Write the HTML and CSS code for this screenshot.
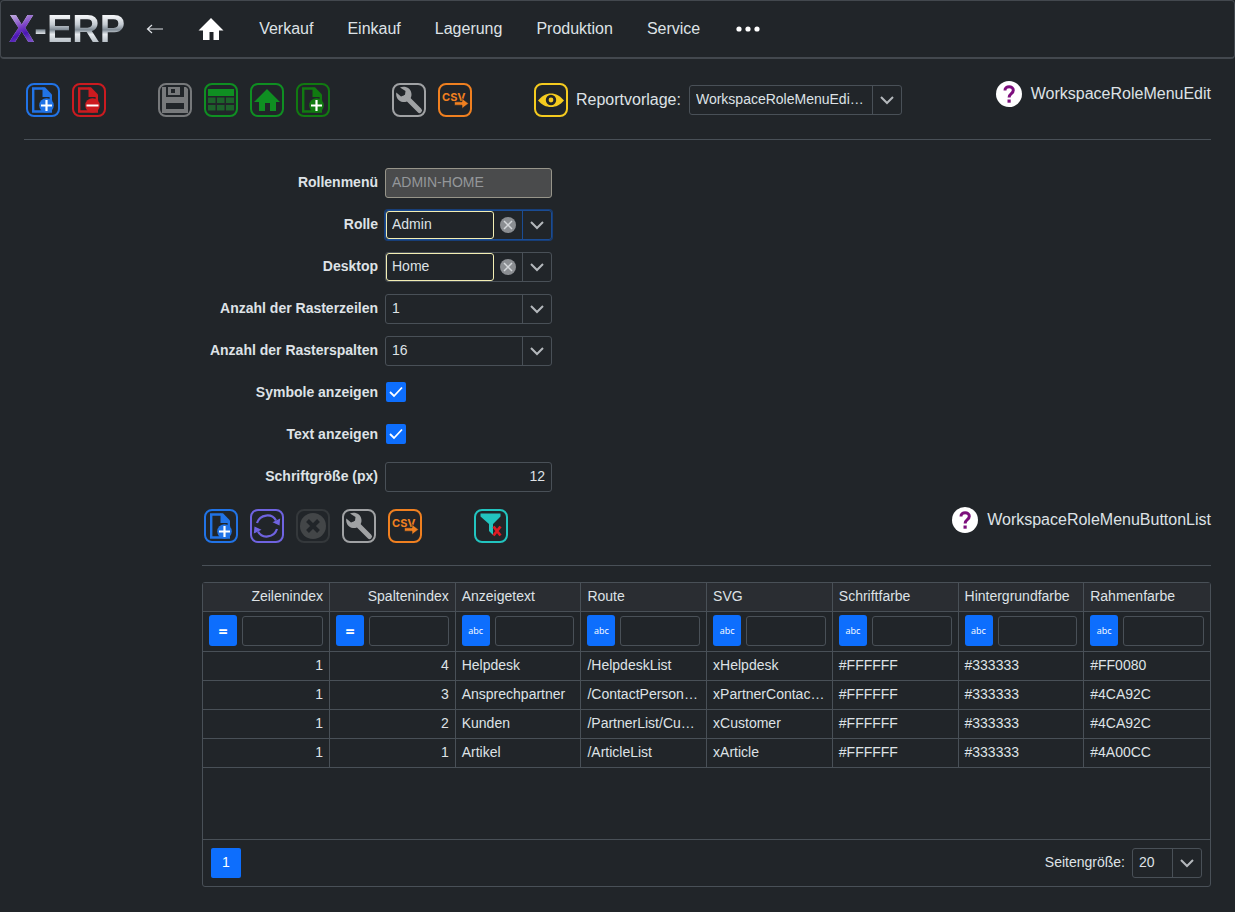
FILE: index.html
```
<!DOCTYPE html>
<html lang="de">
  <head>
    <meta charset="utf-8">
    <meta name="viewport" content="width=device-width, initial-scale=1">
    <title>X-ERP</title>
    <link rel="stylesheet" href="styles.css">
  </head>
  <body>
    <!-- shared icons -->
    <svg class="sprite" width="0" height="0">
      <symbol id="i-doc" viewBox="0 0 30 30">
        <path d="M22.800 11v15.500H5.200v-23h10" fill="none" stroke="currentColor" stroke-width="2.400"/>
        <path d="M14.500 2.300H17l7 7.200V12h-9.500z" fill="currentColor"/>
        <circle cx="18.500" cy="20.500" r="7.300" fill="currentColor"/>
      </symbol>
      <symbol id="i-doc-plus" viewBox="0 0 30 30">
        <use href="#i-doc"/>
        <path d="M18.500 15v11M13 20.500h11" stroke="#fff" stroke-width="2.200"/>
      </symbol>
      <symbol id="i-doc-minus" viewBox="0 0 30 30">
        <use href="#i-doc"/>
        <path d="M12.500 20.500h12" stroke="#fff" stroke-width="2"/>
      </symbol>
      <symbol id="i-wrench" viewBox="0 0 30 30">
        <path d="M12 12l13.500 13.500" stroke="currentColor" stroke-width="5" stroke-linecap="round"/>
        <path d="M6 2.500C11 .500 17 3 17.500 9c.300 5-4 8.500-8.500 8C4.500 16.500 1.500 12.500 2.300 7.500L7 11.500l4-1.500.500-4z" fill="currentColor"/>
      </symbol>
      <symbol id="i-csv" viewBox="0 0 30 30">
        <text class="csv-text" x="2" y="16" fill="currentColor">CSV</text>
        <path d="M14.500 16.800h7.500V13.500l6.500 5-6.500 5v-3.300h-7.500z" fill="currentColor" stroke="#212529" stroke-width=".6"/>
      </symbol>
      <symbol id="i-home" viewBox="0 0 30 30">
        <path d="M15 4l13 13h-4v9h-6v-8h-5v8H7v-9H2z" fill="currentColor"/>
      </symbol>
      <symbol id="i-chevron" viewBox="0 0 14 14">
        <path d="M1 4l6 6 6-6" fill="none" stroke="currentColor" stroke-width="2"/>
      </symbol>
      <symbol id="i-clear" viewBox="0 0 16 16">
        <circle cx="8" cy="8" r="8" fill="#8b8e92"/>
        <path d="M4 4l8 8M12 4l-8 8" stroke="#d4d7da" stroke-width="1.500"/>
      </symbol>
      <symbol id="i-help" viewBox="0 0 26 26">
        <circle cx="13" cy="13" r="13" fill="#fff"/>
        <path d="M9 9.500C8.700 4.300 17.500 4.500 17.300 9.300c0 3.500-4.200 3.200-4.200 7.200" fill="none" stroke="#7d0f7d" stroke-width="3"/>
        <path d="M11.500 18.500h3.200v3.200h-3.200z" fill="#7d0f7d"/>
      </symbol>
    </svg>

    <header class="topbar">
      <a class="logo" href="#">X-ERP</a>
      <button class="back" type="button" aria-label="Zurück">
        <svg width="18" height="12" viewBox="0 0 18 12"><path d="M17 6H2M6 2L1.500 6 6 10" fill="none" stroke="currentColor" stroke-width="1.200"/></svg>
      </button>
      <a class="home" href="#" aria-label="Home">
        <svg width="26" height="24" viewBox="0 0 26 24"><path d="M13 1l12.500 12.500H21V23h-5.500v-8h-4v8H5v-9.500H.5z" fill="#fff"/></svg>
      </a>
      <nav class="menu">
        <a href="#">Verkauf</a>
        <a href="#">Einkauf</a>
        <a href="#">Lagerung</a>
        <a href="#">Produktion</a>
        <a href="#">Service</a>
      </nav>
      <button class="more" type="button" aria-label="Mehr">
        <svg width="24" height="6" viewBox="0 0 24 6" fill="#fff"><circle cx="3" cy="3" r="2.600"/><circle cx="12" cy="3" r="2.600"/><circle cx="21" cy="3" r="2.600"/></svg>
      </button>
    </header>

    <main class="page">
      <div class="toolbar">
        <div class="tools">
          <div class="tool-group">
            <button class="tool blue" type="button" aria-label="Neu"><svg><use href="#i-doc-plus"/></svg></button>
            <button class="tool red" type="button" aria-label="Löschen"><svg><use href="#i-doc-minus"/></svg></button>
          </div>
          <div class="tool-group">
            <button class="tool grey" type="button" aria-label="Speichern">
              <svg viewBox="0 0 30 30" fill="currentColor"><path d="M2 2h4v10h18V2h2l2 2v24H2zM6 18v6h18v-6z" fill-rule="evenodd"/><path d="M8 2h12v8H8zM11 4v4h4V4z" fill-rule="evenodd"/></svg>
            </button>
            <button class="tool green" type="button" aria-label="Speichern und Liste">
              <svg viewBox="0 0 30 30"><path d="M2 4h26v7H2z" fill="currentColor"/><path d="M2 12.500h7.500V18H2zM11 12.500h7.500V18H11zM20 12.500h8V18h-8zM2 20h7.500v5.500H2zM11 20h7.500v5.500H11zM20 20h8v5.500h-8z" fill="#1d622b"/></svg>
            </button>
            <button class="tool green" type="button" aria-label="Speichern und Home"><svg><use href="#i-home"/></svg></button>
            <button class="tool green dark" type="button" aria-label="Speichern und Neu"><svg><use href="#i-doc-plus"/></svg></button>
          </div>
          <div class="tool-group wide">
            <button class="tool silver" type="button" aria-label="Werkzeuge"><svg><use href="#i-wrench"/></svg></button>
            <button class="tool orange" type="button" aria-label="CSV Export"><svg><use href="#i-csv"/></svg></button>
          </div>
          <div class="tool-group wide">
            <button class="tool yellow" type="button" aria-label="Vorschau">
              <svg viewBox="0 0 30 30"><path d="M2 15.500C6 11 10 8.500 15 8.500s9 2.500 13 7c-4 4.500-8 6.500-13 6.500s-9-2-13-6.500z" fill="currentColor"/><circle cx="15" cy="15" r="3.800" fill="none" stroke="#212529" stroke-width="2.800"/></svg>
            </button>
          </div>
          <label class="report-label" for="report">Reportvorlage:</label>
          <div class="dropdown report">
            <select id="report"><option>WorkspaceRoleMenuEditReport</option></select>
            <span class="arrow"><svg><use href="#i-chevron"/></svg></span>
          </div>
        </div>
        <a class="help" href="#"><svg><use href="#i-help"/></svg>WorkspaceRoleMenuEdit</a>
      </div>

      <div class="content">
        <form class="form">
          <label for="menu">Rollenmenü</label>
          <input class="text readonly" id="menu" type="text" value="ADMIN-HOME" disabled>

          <label for="role">Rolle</label>
          <div class="combo focused">
            <input id="role" type="text" value="Admin">
            <button class="clear" type="button" aria-label="Leeren"><svg><use href="#i-clear"/></svg></button>
            <button class="arrow" type="button" aria-label="Öffnen"><svg><use href="#i-chevron"/></svg></button>
          </div>

          <label for="desktop">Desktop</label>
          <div class="combo">
            <input id="desktop" type="text" value="Home">
            <button class="clear" type="button" aria-label="Leeren"><svg><use href="#i-clear"/></svg></button>
            <button class="arrow" type="button" aria-label="Öffnen"><svg><use href="#i-chevron"/></svg></button>
          </div>

          <label for="rows">Anzahl der Rasterzeilen</label>
          <div class="dropdown">
            <select id="rows"><option>1</option></select>
            <span class="arrow"><svg><use href="#i-chevron"/></svg></span>
          </div>

          <label for="cols">Anzahl der Rasterspalten</label>
          <div class="dropdown">
            <select id="cols"><option>16</option></select>
            <span class="arrow"><svg><use href="#i-chevron"/></svg></span>
          </div>

          <label for="icons">Symbole anzeigen</label>
          <input class="check" id="icons" type="checkbox" checked>

          <label for="texts">Text anzeigen</label>
          <input class="check" id="texts" type="checkbox" checked>

          <label for="size">Schriftgröße (px)</label>
          <input class="text number" id="size" type="text" value="12">
        </form>

        <div class="toolbar">
          <div class="tools">
            <div class="tool-group">
              <button class="tool blue" type="button" aria-label="Neu"><svg><use href="#i-doc-plus"/></svg></button>
              <button class="tool indigo" type="button" aria-label="Aktualisieren">
                <svg viewBox="0 0 30 30"><path d="M5 12C8 3 20 2 24 9.500M25 18c-3 9-15 10-19 2.500" fill="none" stroke="currentColor" stroke-width="2.200"/><path d="M28.200 7.500l-.700 7-7-3.200zM1.800 22.500l.700-7 7 3.200z" fill="currentColor"/></svg>
              </button>
              <button class="tool off" type="button" aria-label="Abbrechen" disabled>
                <svg viewBox="0 0 30 30"><circle cx="15" cy="15" r="13" fill="currentColor"/><path d="M9.500 9.500l11 11M20.500 9.500l-11 11" stroke="#212529" stroke-width="4"/></svg>
              </button>
              <button class="tool silver" type="button" aria-label="Werkzeuge"><svg><use href="#i-wrench"/></svg></button>
              <button class="tool orange" type="button" aria-label="CSV Export"><svg><use href="#i-csv"/></svg></button>
            </div>
            <div class="tool-group">
              <button class="tool teal" type="button" aria-label="Filter löschen">
                <svg viewBox="0 0 30 30"><path d="M4.500 2.500h20v3L17 13v11l-4-4v-7L4.500 5.500z" fill="currentColor"/><path d="M17.500 15.500l7 9M24.500 15.500l-7 9" stroke="#e01b24" stroke-width="2.800"/></svg>
              </button>
            </div>
          </div>
          <a class="help" href="#"><svg><use href="#i-help"/></svg>WorkspaceRoleMenuButtonList</a>
        </div>

        <div class="grid">
          <table>
            <colgroup>
              <col class="first">
              <col span="7">
            </colgroup>
            <thead>
              <tr>
                <th class="num">Zeilenindex</th>
                <th class="num">Spaltenindex</th>
                <th>Anzeigetext</th>
                <th>Route</th>
                <th>SVG</th>
                <th>Schriftfarbe</th>
                <th>Hintergrundfarbe</th>
                <th>Rahmenfarbe</th>
              </tr>
              <tr class="filters">
                <td><div class="filter"><button class="eq" type="button">=</button><input type="text" aria-label="Zeilenindex"></div></td>
                <td><div class="filter"><button class="eq" type="button">=</button><input type="text" aria-label="Spaltenindex"></div></td>
                <td><div class="filter"><button type="button">abc</button><input type="text" aria-label="Anzeigetext"></div></td>
                <td><div class="filter"><button type="button">abc</button><input type="text" aria-label="Route"></div></td>
                <td><div class="filter"><button type="button">abc</button><input type="text" aria-label="SVG"></div></td>
                <td><div class="filter"><button type="button">abc</button><input type="text" aria-label="Schriftfarbe"></div></td>
                <td><div class="filter"><button type="button">abc</button><input type="text" aria-label="Hintergrundfarbe"></div></td>
                <td><div class="filter"><button type="button">abc</button><input type="text" aria-label="Rahmenfarbe"></div></td>
              </tr>
            </thead>
            <tbody>
              <tr><td class="num">1</td><td class="num">4</td><td>Helpdesk</td><td>/HelpdeskList</td><td>xHelpdesk</td><td>#FFFFFF</td><td>#333333</td><td>#FF0080</td></tr>
              <tr><td class="num">1</td><td class="num">3</td><td>Ansprechpartner</td><td>/ContactPersonList</td><td>xPartnerContactPerson</td><td>#FFFFFF</td><td>#333333</td><td>#4CA92C</td></tr>
              <tr><td class="num">1</td><td class="num">2</td><td>Kunden</td><td>/PartnerList/Customer</td><td>xCustomer</td><td>#FFFFFF</td><td>#333333</td><td>#4CA92C</td></tr>
              <tr><td class="num">1</td><td class="num">1</td><td>Artikel</td><td>/ArticleList</td><td>xArticle</td><td>#FFFFFF</td><td>#333333</td><td>#4A00CC</td></tr>
            </tbody>
          </table>
          <div class="pager">
            <button class="page-no" type="button">1</button>
            <label class="size-label" for="pagesize">Seitengröße:</label>
            <div class="dropdown page-size">
              <select id="pagesize"><option>20</option></select>
              <span class="arrow"><svg><use href="#i-chevron"/></svg></span>
            </div>
          </div>
        </div>
      </div>
    </main>
  </body>
</html>
```

FILE: styles.css
```
:root {
  --bg: #212529;
  --text: #dee2e6;
  --line: #495057;
  --blue: #0d6efd;
}

* {
  box-sizing: border-box;
}

body {
  margin: 0;
  background: var(--bg);
  color: var(--text);
  font-family: "Liberation Sans", Arial, sans-serif;
  font-size: 14px;
  line-height: 20px;
}

a {
  color: inherit;
  text-decoration: none;
}

button,
input,
select {
  margin: 0;
  padding: 0;
  border: 0;
  background: none;
  color: inherit;
  font: inherit;
  outline: none;
}

svg {
  display: block;
}

.sprite {
  position: absolute;
}

/* top navigation */
.topbar {
  display: flex;
  align-items: center;
  height: 59px;
  padding: 0 8px;
  border: 1px solid #43484e;
  border-bottom-width: 2px;
  border-radius: 4px;
}

/* purple X, metallic rest */
.logo {
  background-image:
    linear-gradient(160deg, #b9a0dc 20%, #7a3fc4 45%, #4a16b4 60%, #8a62cc 85%),
    linear-gradient(#f4f6f8 20%, #c3cad1 40%, #7f8a94 52%, #e8ecf0 62%, #9ba5ae 90%);
  background-repeat: no-repeat;
  background-size: 26px 100%, 100% 100%;
  -webkit-background-clip: text;
  background-clip: text;
  color: transparent;
  font-size: 38px;
  font-weight: bold;
  line-height: 44px;
}

.back {
  margin-left: 21px;
}

.home {
  margin-left: 34px;
}

.menu {
  display: flex;
  gap: 34px;
  margin-left: 35px;
  font-size: 16px;
}

.more {
  margin-left: 36px;
}

.page {
  padding: 22px 24px 25px;
}

/* icon toolbars */
.toolbar {
  display: flex;
  justify-content: space-between;
  align-items: flex-start;
  padding-bottom: 20px;
  border-bottom: 1px solid var(--line);
}

.tools {
  display: flex;
  align-items: center;
  padding: 2px;
}

.tool-group {
  display: flex;
  gap: 12px;
}

.tool-group + .tool-group {
  margin-left: 52px;
}

.tool-group + .wide {
  margin-left: 62px;
}

.tool {
  width: 34px;
  height: 34px;
  border: 2px solid currentColor;
  border-radius: 8px;
}

.tool svg {
  width: 30px;
  height: 30px;
}

.blue { color: #2173e6; }
.red { color: #cc1b20; }
.grey { color: #77797b; }
.green { color: #0f8f22; }
.dark { color: #117a11; }
.silver { color: #a0a2a4; }
.orange { color: #f08020; }
.yellow { color: #f5cb1f; }
.indigo { color: #6f63e0; }
.off { color: #434648; }
.teal { color: #22c4bf; }

.off {
  border-color: #34383b;
}

.csv-text {
  font-family: Inter, sans-serif;
  font-size: 11px;
  font-weight: 700;
}

.report-label {
  margin: 0 8px;
  font-size: 16px;
}

.help {
  display: flex;
  align-items: center;
  gap: 9px;
  font-size: 16px;
}

.help svg {
  width: 26px;
  height: 26px;
}

/* select with a separate arrow cell */
.dropdown {
  display: grid;
  grid-template-columns: 1fr 29px;
  width: 167px;
  height: 30px;
  border: 1px solid var(--line);
  border-radius: 3px;
}

.dropdown select {
  grid-area: 1 / 1 / 2 / 3;
  min-width: 0;
  padding: 0 35px 2px 6px;
  appearance: none;
  text-overflow: ellipsis;
}

.dropdown option {
  background: var(--bg);
}

.dropdown .arrow {
  grid-area: 1 / 2;
  pointer-events: none;
}

.arrow {
  display: flex;
  align-items: center;
  justify-content: center;
  border-left: 1px solid var(--line);
  color: #b4b8bc;
}

.arrow svg {
  width: 14px;
  height: 14px;
}

.report {
  width: 213px;
}

/* edit form */
.content {
  padding-left: 178px;
}

.form {
  display: grid;
  grid-template-columns: 176px 167px;
  grid-auto-rows: 30px;
  gap: 12px 7px;
  align-items: center;
  padding: 28px 0 15px;
}

.form label {
  padding-bottom: 2px;
  font-weight: bold;
  text-align: right;
}

.text {
  width: 100%;
  height: 30px;
  padding: 0 6px 2px;
  border: 1px solid var(--line);
  border-radius: 3px;
}

.readonly {
  border-color: #97958a;
  background: #4a4b4c;
  color: #94979a;
}

.number {
  text-align: right;
}

.combo {
  display: grid;
  grid-template-columns: 1fr 28px 29px;
  height: 30px;
  border: 1px solid var(--line);
  border-radius: 3px;
}

.combo input {
  min-width: 0;
  padding: 0 5px 2px;
  border: 1px solid #f3eeb4;
  border-radius: 3px;
}

.clear {
  display: flex;
  align-items: center;
  justify-content: center;
}

.clear svg {
  width: 16px;
  height: 16px;
}

.focused {
  border-color: #1b4c93;
  box-shadow: 0 0 0 1px #173e78;
}

.focused .arrow {
  border-color: #1b4c93;
}

.check {
  width: 20px;
  height: 20px;
  margin: 0 0 2px 1px;
  border-radius: 2px;
  appearance: none;
}

.check:checked {
  background: var(--blue) url("data:image/svg+xml,%3Csvg xmlns='http://www.w3.org/2000/svg' viewBox='0 0 20 20'%3E%3Cpath d='M4 10l4 4 8-8.500' fill='none' stroke='%23fff' stroke-width='1.800'/%3E%3C/svg%3E");
}

/* data grid */
.grid {
  display: flex;
  flex-direction: column;
  min-height: 305px;
  margin-top: 16px;
  border: 1px solid var(--line);
  border-radius: 3px;
}

table {
  width: 100%;
  border-collapse: separate;
  border-spacing: 0;
  table-layout: fixed;
}

.first {
  width: 127px;
}

th,
td {
  height: 29px;
  padding: 0 6px 2px;
  border-right: 1px solid var(--line);
  border-bottom: 1px solid var(--line);
  overflow: hidden;
  font-weight: normal;
  text-align: left;
  text-overflow: ellipsis;
  white-space: nowrap;
}

th {
  background: #2a2d32;
}

th:last-child,
td:last-child {
  border-right: 0;
}

.num {
  text-align: right;
}

.filters td {
  height: 40px;
}

.filter {
  display: flex;
  align-items: center;
  gap: 5px;
}

.filter button {
  flex: none;
  width: 28px;
  height: 31px;
  border-radius: 3px;
  background: var(--blue);
  color: #fff;
  font-family: "Open Sans", sans-serif;
  font-size: 9px;
}

.filter .eq {
  font-size: 16px;
  font-weight: bold;
}

.filter input {
  flex: 1;
  min-width: 0;
  height: 30px;
  padding: 0 5px;
  border: 1px solid var(--line);
  border-radius: 3px;
}

.pager {
  display: flex;
  align-items: center;
  margin-top: auto;
  padding: 8px;
  border-top: 1px solid var(--line);
}

.page-no {
  width: 30px;
  height: 30px;
  padding-bottom: 2px;
  border-radius: 2px;
  background: var(--blue);
  color: #fff;
}

.size-label {
  margin: 0 7px 0 auto;
  padding-bottom: 2px;
}

.page-size {
  width: 70px;
}

.page-size select {
  padding-right: 29px;
}
```
